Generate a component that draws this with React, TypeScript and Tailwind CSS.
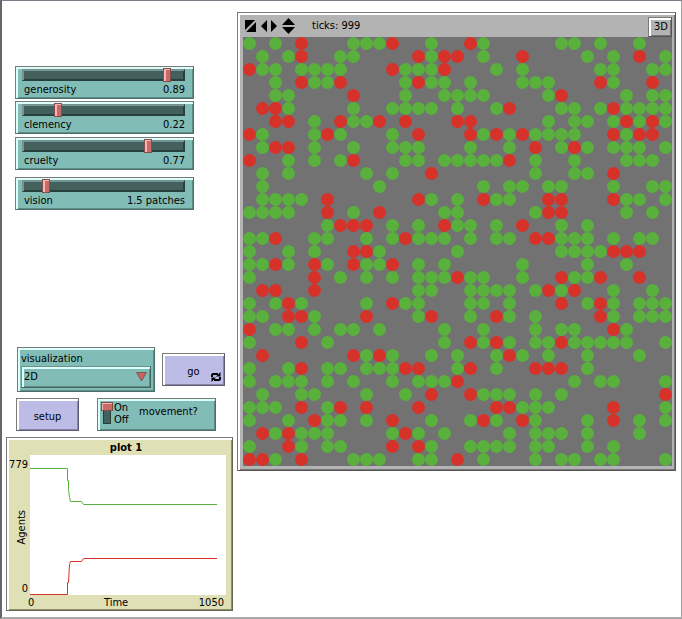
import { useState } from "react";
import type { ReactNode } from "react";

type Row = { g: number[]; r: number[] };

const GRID = 33;
const CELL = 13;

const AGENTS: Row[] = [
  { g: [0, 2, 8, 9, 10, 14, 18, 24, 25, 27, 30], r: [4, 11, 17] },
  { g: [1, 3, 7, 8, 14, 18, 26, 28, 32], r: [4, 13, 15, 16, 21, 30] },
  { g: [1, 2, 4, 5, 6, 7, 12, 13, 14, 19, 21, 27, 28, 31, 32], r: [0, 11, 15] },
  { g: [2, 5, 6, 12, 14, 15, 17, 21, 22, 23, 28], r: [4, 7, 13, 27, 31] },
  { g: [2, 3, 12, 15, 16, 17, 18, 23, 29, 31, 32], r: [8, 24] },
  { g: [3, 8, 11, 12, 13, 14, 16, 19, 24, 25, 27, 29, 30, 31, 32], r: [1, 2, 20, 28] },
  { g: [5, 8, 9, 23, 25, 26, 28, 30, 32], r: [2, 3, 7, 10, 12, 16, 17, 29, 31] },
  { g: [1, 5, 7, 11, 18, 20, 22, 23, 24, 25, 29], r: [0, 6, 13, 17, 19, 21, 28, 30, 31] },
  { g: [1, 5, 8, 11, 12, 13, 17, 20, 24, 26, 28, 29, 30, 32], r: [2, 3, 22, 25] },
  { g: [3, 5, 7, 12, 13, 15, 16, 17, 18, 19, 22, 25, 29, 30, 31], r: [0, 8, 20] },
  { g: [1, 3, 9, 11, 22, 25, 26], r: [14, 28] },
  { g: [1, 10, 18, 20, 21, 23, 24, 28, 31, 32], r: [] },
  { g: [1, 2, 3, 4, 14, 16, 19, 20, 29, 30, 32], r: [6, 13, 18, 23, 24, 28] },
  { g: [0, 1, 2, 3, 8, 15, 16, 22, 29, 31], r: [6, 10, 23, 24] },
  { g: [6, 11, 13, 16, 17, 19, 24, 26], r: [7, 8, 9, 15, 21] },
  { g: [0, 1, 5, 6, 9, 11, 13, 14, 15, 17, 19, 20, 24, 25, 26, 28, 30, 31], r: [2, 12, 22, 23] },
  { g: [0, 3, 5, 10, 16, 24, 25, 26, 27], r: [8, 9, 28, 29, 30] },
  { g: [0, 1, 3, 6, 9, 10, 13, 15, 21, 26, 29], r: [2, 5, 8, 11] },
  { g: [0, 7, 9, 11, 13, 14, 15, 17, 18, 21, 25, 26], r: [5, 16, 24, 27, 30] },
  { g: [13, 14, 17, 18, 19, 20, 22, 24, 28, 31], r: [1, 2, 5, 23, 25] },
  { g: [0, 2, 4, 9, 12, 13, 17, 18, 20, 26, 28, 30, 31, 32], r: [3, 11, 24, 27] },
  { g: [0, 1, 5, 13, 17, 20, 22, 28, 30, 31, 32], r: [3, 4, 9, 14, 19, 27] },
  { g: [2, 3, 5, 7, 8, 10, 15, 18, 22, 24, 25, 29], r: [0, 28] },
  { g: [0, 6, 15, 18, 20, 22, 23, 25, 26, 27, 28, 29, 32], r: [4, 17, 19, 24] },
  { g: [9, 11, 14, 16, 19, 21, 23, 26, 30], r: [1, 8, 10, 20] },
  { g: [0, 3, 6, 7, 9, 10, 11, 16, 19, 26], r: [4, 12, 13, 17, 22, 23, 24] },
  { g: [0, 2, 3, 4, 6, 8, 11, 13, 14, 15, 25, 27, 28, 32], r: [16] },
  { g: [1, 4, 5, 9, 12, 18, 19, 20, 22, 24], r: [14, 17, 32] },
  { g: [0, 1, 2, 6, 21, 22, 23, 32], r: [4, 7, 9, 13, 19, 20, 28] },
  { g: [0, 3, 6, 7, 9, 14, 17, 19, 22, 26, 30, 32], r: [5, 11, 18, 21, 28] },
  { g: [2, 4, 5, 6, 11, 13, 15, 20, 22, 23, 24, 26, 30], r: [1, 3, 12] },
  { g: [0, 4, 6, 7, 14, 17, 18, 19, 20, 22, 23, 26, 28], r: [3, 11, 13] },
  { g: [2, 8, 9, 10, 13, 14, 18, 22, 24, 25, 27, 28, 32], r: [0, 1, 4, 16] },
];

const WIDGET =
  "border border-t-[#7a7a7a] border-l-[#7a7a7a] border-r-[#4b7069] border-b-[#4b7069] bg-[#82bcb6] shadow-[inset_2px_2px_0_#dcfffb,inset_-1px_-1px_0_#5f8a85]";
const BUTTON =
  "border border-t-[#7a7a7a] border-l-[#7a7a7a] border-r-[#5d5c74] border-b-[#5d5c74] bg-[#bcbce6] shadow-[inset_2px_2px_0_#ffffff,inset_-1px_-1px_0_#8685a4]";

function Slider({ id, label, initial, max, step, unit = "" }: {
  id: string; label: string; initial: number; max: number; step: number; unit?: string;
}) {
  const [value, setValue] = useState(initial);
  return (
    <div className={`${WIDGET} h-[33px] pt-0.5 pr-2 pl-1.5`}>
      <div className="h-3 border border-t-[#7a8d8a] border-l-[#7a8d8a] border-r-[#28403d] border-b-[#28403d] bg-[#44605c] shadow-[inset_1px_1px_0_#6f9d98,inset_-1px_-1px_0_#28403d]">
        {/* The input overhangs the groove so the thumb centre can reach both ends. */}
        <div className="-mx-[5px]">
          <input
            id={id}
            type="range"
            min={0}
            max={max}
            step={step}
            value={value}
            onChange={(e) => setValue(Number(e.target.value))}
            className="block h-2.5 w-full appearance-none bg-transparent [&::-webkit-slider-thumb]:h-3.5 [&::-webkit-slider-thumb]:w-2 [&::-webkit-slider-thumb]:appearance-none [&::-webkit-slider-thumb]:border [&::-webkit-slider-thumb]:border-[#80504f] [&::-webkit-slider-thumb]:bg-[#c76a69] [&::-webkit-slider-thumb]:shadow-[inset_2px_1px_0_#ffb3b1]"
          />
        </div>
      </div>
      <div className="flex justify-between pt-px pl-0.5 leading-4">
        <label htmlFor={id}>{label}</label>
        <output htmlFor={id}>{value}{unit}</output>
      </div>
    </div>
  );
}

function Button({ children }: { children: ReactNode }) {
  return (
    <button type="button" className={`${BUTTON} relative h-[33px] w-[63px] pt-1.5`}>
      {children}
    </button>
  );
}

function Chooser() {
  return (
    <div className={`${WIDGET} h-[45px] w-[138px] px-[3px] pt-[3px]`}>
      <label htmlFor="visualization" className="block leading-[15px]">visualization</label>
      <div className="relative">
        <select
          id="visualization"
          className="block h-[22px] w-full appearance-none border border-t-[#6f8f8b] border-l-[#6f8f8b] border-r-[#436661] border-b-[#436661] bg-[#82bcb6] pl-0.5 shadow-[inset_2px_2px_0_#dcfffb,inset_-1px_-1px_0_#5f8a85]"
        >
          <option>2D</option>
          <option>3D</option>
        </select>
        <svg viewBox="0 0 11 10" className="pointer-events-none absolute top-1.5 right-1 h-2.5 w-[11px]">
          <path d="M.5 .5H10.5L5.5 9Z" fill="#d0605e" stroke="#6b5f5c" />
        </svg>
      </div>
    </div>
  );
}

function MovementSwitch() {
  return (
    <label className={`${WIDGET} flex h-[33px] w-[119px] pt-[3px] pl-[3px]`}>
      <input
        type="checkbox"
        role="switch"
        defaultChecked
        className="relative h-[22px] w-3 appearance-none before:absolute before:inset-y-0 before:left-0.5 before:w-2 before:border before:border-[#28403d] before:bg-[#44605c] after:absolute after:bottom-0 after:left-0 after:h-[9px] after:w-3 after:border after:border-[#80504f] after:bg-[#c76a69] after:shadow-[inset_1px_1px_0_#ffb3b1] checked:after:top-0"
      />
      <span className="ml-px flex w-[25px] flex-col leading-3">
        <span>On</span>
        <span>Off</span>
      </span>
      <span className="pt-0.5 leading-4">movement?</span>
    </label>
  );
}

function Plot() {
  return (
    <section className="border border-t-[#7a7a7a] border-l-[#7a7a7a] border-r-[#66664f] border-b-[#66664f] bg-[#e0e0b6] pt-0.5 pr-1.5 pb-px pl-[3px] shadow-[inset_2px_2px_0_#ffffff,inset_-1px_-1px_0_#8f8f70]">
      <h2 className="pl-4 text-center leading-[15px] font-bold">plot 1</h2>
      <div className="flex">
        <div className="flex w-5 flex-col items-end justify-between pr-0.5">
          <span className="pt-1 leading-3">779</span>
          <span className="rotate-180 leading-3 [writing-mode:vertical-rl]">Agents</span>
          <span className="leading-3">0</span>
        </div>
        <svg viewBox="0 0 196 140" className="min-w-0 flex-1 bg-white" fill="none">
          <path d="M0 13.5H37.5V25.5H38.5V34.5L39.5 42.5L40.5 46.5H51.5L53.5 49.5H187" stroke="#59b03c" />
          <path d="M0 139.5H37.5V127.5H38.5L39.5 109.5L40.5 106.5H51.5L53.5 103.5H187" stroke="#d73229" />
        </svg>
      </div>
      <div className="grid grid-cols-[76px_1fr_auto] pt-0.5 pr-0.5 pl-[18px] leading-3">
        <span>0</span>
        <span>Time</span>
        <span>1050</span>
      </div>
    </section>
  );
}

function World() {
  return (
    <section className="border border-t-[#7a7a7a] border-l-[#7a7a7a] border-r-[#555555] border-b-[#555555] bg-[#b3b3b3] pt-0.5 pr-[3px] pb-1 pl-[5px] shadow-[inset_2px_2px_0_#ffffff,inset_-1px_-1px_0_#777777]">
      <header className="flex h-[22px] items-center">
        <svg viewBox="0 0 52 16" className="h-4 w-[52px]" fill="#000000">
          <path d="M2 2H12L2 12ZM13 4V14H3Z" />
          <path d="M24 2V14L18 8ZM28 2V14L34 8Z" />
          <path d="M39 7L45.500 0L52 7ZM39 9H52L45.500 16Z" />
        </svg>
        <span className="ml-[17px]">ticks: 999</span>
        <button
          type="button"
          className="mt-0.5 ml-auto h-5 w-6 border border-t-[#7a7a7a] border-l-[#7a7a7a] border-r-[#555555] border-b-[#555555] bg-[#b3b3b3] pl-0.5 shadow-[inset_2px_2px_0_#ffffff,inset_-1px_-1px_0_#777777]"
        >
          3D
        </button>
      </header>
      <svg viewBox={`0 0 ${GRID * CELL} ${GRID * CELL}`} className="block w-full bg-[#727272]">
        {AGENTS.map((row, y) => (
          <g key={y}>
            {row.g.map((x) => (
              <circle key={`g${x}`} cx={x * CELL + 6.5} cy={y * CELL + 6.5} r={6.5} fill="#59b03c" />
            ))}
            {row.r.map((x) => (
              <circle key={`r${x}`} cx={x * CELL + 6.5} cy={y * CELL + 6.5} r={6.5} fill="#d73229" />
            ))}
          </g>
        ))}
      </svg>
    </section>
  );
}

export default function App() {
  return (
    <main className="flex min-h-screen items-start gap-1 border-t border-r border-b-2 border-l-2 border-t-[#7a7d88] border-r-[#a0a0a0] border-b-[#aaaaaa] border-l-[#66666a] bg-white pr-[5px] pl-1 font-['DejaVu_Sans_Condensed','DejaVu_Sans',sans-serif] text-[11px] text-black">
      <div className="w-[227px] shrink-0 pt-[65px]">
        <div className="mr-[39px] ml-[9px]">
          <Slider id="generosity" label="generosity" initial={0.89} max={1} step={0.01} />
          <div className="mt-0.5">
            <Slider id="clemency" label="clemency" initial={0.22} max={1} step={0.01} />
          </div>
          <div className="mt-[3px]">
            <Slider id="cruelty" label="cruelty" initial={0.77} max={1} step={0.01} />
          </div>
          <div className="mt-[7px]">
            <Slider id="vision" label="vision" initial={1.5} max={10} step={0.5} unit=" patches" />
          </div>
        </div>
        <div className="mt-[137px] flex items-center gap-[7px] pl-[11px]">
          <Chooser />
          <Button>
            go
            <svg viewBox="0 0 10 10" className="absolute right-[3px] bottom-[3px] size-2.5" fill="none" stroke="#000000" strokeWidth="2">
              <path d="M1 5V3L2 2H7M9 5V7L8 8H3" />
              <path d="M5 4.500H9.500V0ZM5 5.500H.5V10Z" fill="#000000" stroke="none" />
            </svg>
          </Button>
        </div>
        <div className="mt-1.5 mb-1.5 flex gap-[18px] pl-2.5">
          <Button>setup</Button>
          <MovementSwitch />
        </div>
        <Plot />
      </div>
      <div className="min-w-0 flex-1 pt-[11px]">
        <World />
      </div>
    </main>
  );
}
